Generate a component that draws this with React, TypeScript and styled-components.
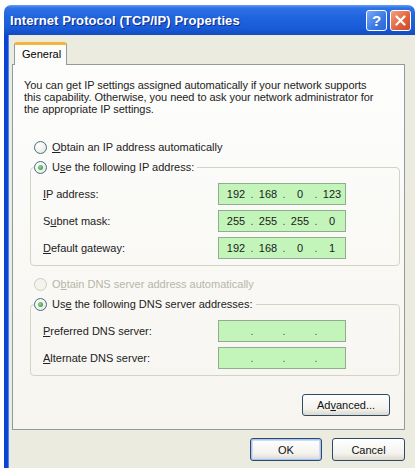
import styled, { createGlobalStyle } from "styled-components";

const GlobalStyle = createGlobalStyle`
  html, body {
    margin: 0;
    padding: 0;
    background: #fff;
  }
  body {
    font-family: "Liberation Sans", Arial, sans-serif;
    font-size: 11px;
    color: #000;
  }
`;

const ipRows = [
  { label: "IP address:", key: "I", rest: "P address:", value: ["192", "168", "0", "123"] },
  { label: "Subnet mask:", pre: "S", key: "u", rest: "bnet mask:", value: ["255", "255", "255", "0"] },
  { label: "Default gateway:", key: "D", rest: "efault gateway:", value: ["192", "168", "0", "1"] },
];

const dnsRows = [
  { key: "P", rest: "referred DNS server:", value: ["", "", "", ""] },
  { key: "A", rest: "lternate DNS server:", value: ["", "", "", ""] },
];

const App = () => {
  return (
    <>
      <GlobalStyle />
      <Window>
        <TitleBar>
          <Title>Internet Protocol (TCP/IP) Properties</Title>
          <CaptionButton $kind="help">?</CaptionButton>
          <CaptionButton $kind="close">
            <svg width="11" height="11" viewBox="0 0 11 11">
              <path d="M1.5 1.5 L9.5 9.5 M9.5 1.5 L1.5 9.5" stroke="#fff" strokeWidth="2.2" strokeLinecap="round" />
            </svg>
          </CaptionButton>
        </TitleBar>
        <Frame>
          <TabStrip>
            <Tab>General</Tab>
          </TabStrip>
          <Panel>
            <Description>
              You can get IP settings assigned automatically if your network supports
              <br />
              this capability. Otherwise, you need to ask your network administrator for
              <br />
              the appropriate IP settings.
            </Description>

            <RadioRow>
              <Radio />
              <span>
                <Key>O</Key>btain an IP address automatically
              </span>
            </RadioRow>

            <Group>
              <Legend>
                <Radio $checked />
                <span>
                  U<Key>s</Key>e the following IP address:
                </span>
              </Legend>
              <FieldGrid>
                {ipRows.map((row) => (
                  <Row key={row.label}>
                    <Label>
                      {row.pre}
                      <Key>{row.key}</Key>
                      {row.rest}
                    </Label>
                    <IpField value={row.value} />
                  </Row>
                ))}
              </FieldGrid>
            </Group>

            <RadioRow $disabled>
              <Radio $disabled />
              <span>
                O<Key>b</Key>tain DNS server address automatically
              </span>
            </RadioRow>

            <Group>
              <Legend>
                <Radio $checked />
                <span>
                  Us<Key>e</Key> the following DNS server addresses:
                </span>
              </Legend>
              <FieldGrid>
                {dnsRows.map((row) => (
                  <Row key={row.rest}>
                    <Label>
                      <Key>{row.key}</Key>
                      {row.rest}
                    </Label>
                    <IpField value={row.value} />
                  </Row>
                ))}
              </FieldGrid>
            </Group>

            <AdvancedButton>
              Ad<Key>v</Key>anced...
            </AdvancedButton>
          </Panel>

          <ButtonRow>
            <Button $default $width={72}>
              OK
            </Button>
            <Button $width={73}>Cancel</Button>
          </ButtonRow>
        </Frame>
      </Window>
    </>
  );
};

const IpField = ({ value }: { value: string[] }) => (
  <Field>
    {value.map((octet, i) => (
      <Segment key={i}>
        {i > 0 && <Dot>.</Dot>}
        <Octet>{octet}</Octet>
      </Segment>
    ))}
  </Field>
);

const Window = styled.div`
  margin: 5px 0 0 4px;
  width: 411px;
  height: 463px;
  display: flex;
  flex-direction: column;
  overflow: hidden;
  border-top-left-radius: 7px;
  border-top-right-radius: 7px;
`;

const TitleBar = styled.div`
  flex: none;
  height: 30px;
  display: flex;
  align-items: center;
  gap: 3px;
  padding: 0 4px 0 6px;
  background: linear-gradient(
    #639cf6 0%,
    #2f72e6 10%,
    #2064de 40%,
    #1a5cd8 75%,
    #114bc2 100%
  );
`;

const Title = styled.div`
  flex: 1;
  color: #fff;
  font: bold 13px "Liberation Sans", Arial, sans-serif;
  letter-spacing: 0.1px;
  text-shadow: 1px 1px 0 #0b2a8a;
`;

const CaptionButton = styled.div<{ $kind: "help" | "close" }>`
  width: 21px;
  height: 21px;
  box-sizing: border-box;
  border: 1px solid #fff;
  border-radius: 3px;
  display: flex;
  align-items: center;
  justify-content: center;
  color: #fff;
  font: bold 15px "Liberation Sans", Arial, sans-serif;
  background: ${(p) =>
    p.$kind === "help"
      ? "linear-gradient(135deg, #7aaaf6, #3a78e4 60%, #2f67d2)"
      : "linear-gradient(135deg, #f3a27e, #e0603a 60%, #c94a2c)"};
`;

const Frame = styled.div`
  flex: 1;
  display: flex;
  flex-direction: column;
  border-left: 4px solid #0b44d3;
  box-shadow: inset 1px 0 0 #4b83ee;
  background: #ecebdf;
  padding: 7px 10px 0 4px;
`;

const TabStrip = styled.div`
  display: flex;
  padding-left: 2px;
  margin-bottom: -1px;
  position: relative;
  z-index: 1;
`;

const Tab = styled.div`
  width: 53px;
  height: 23px;
  box-sizing: border-box;
  border: 1px solid #919b9c;
  border-bottom: none;
  border-top: 3px solid #f5b43a;
  border-radius: 3px 3px 0 0;
  background: #fcfcfb;
  padding: 3px 0 0 7px;
`;

const Panel = styled.div`
  height: 366px;
  box-sizing: border-box;
  border: 1px solid #919b9c;
  background: linear-gradient(#fdfdfc, #f6f5f0);
  padding: 0 4px 0 11px;
  display: flex;
  flex-direction: column;
`;

const Description = styled.p`
  margin: 14px 0 0;
  line-height: 12px;
  letter-spacing: -0.05px;
  color: #222;
`;

const RadioRow = styled.div<{ $disabled?: boolean }>`
  display: flex;
  align-items: center;
  gap: 5px;
  height: 16px;
  margin-left: 10px;
  margin-top: ${(p) => (p.$disabled ? "10px" : "24px")};
  color: ${(p) => (p.$disabled ? "#b8b6a8" : "#222")};
`;

const Radio = styled.span<{ $checked?: boolean; $disabled?: boolean }>`
  width: 13px;
  height: 13px;
  box-sizing: border-box;
  border-radius: 50%;
  border: 1px solid ${(p) => (p.$disabled ? "#cfcdc0" : "#4a6f7e")};
  background: ${(p) =>
    p.$disabled ? "#f4f3ee" : "radial-gradient(circle at 35% 35%, #fff, #e3e2dc)"};
  display: inline-flex;
  align-items: center;
  justify-content: center;
  flex: none;

  &::after {
    content: "";
    width: 5px;
    height: 5px;
    border-radius: 50%;
    background: ${(p) =>
      p.$checked ? "radial-gradient(circle at 40% 40%, #8ed88e, #2f8a3a)" : "transparent"};
  }
`;

const Key = styled.span`
  text-decoration: underline;
`;

const Group = styled.fieldset`
  margin: 4px 0 0 6px;
  padding: 8px 0 6px 12px;
  border: 1px solid #d3d2c3;
  border-radius: 4px;
  min-width: 0;
`;

const Legend = styled.legend`
  display: flex;
  align-items: center;
  gap: 5px;
  height: 16px;
  margin-left: -9px;
  padding: 0 3px 0 0;
  color: #222;
`;

const FieldGrid = styled.div`
  display: flex;
  flex-direction: column;
  gap: 5px;
`;

const Row = styled.div`
  display: grid;
  grid-template-columns: 175px 128px;
  align-items: center;
  height: 22px;
`;

const Label = styled.span`
  color: #222;
`;

const Field = styled.div`
  height: 22px;
  box-sizing: border-box;
  border: 1px solid #90ae8c;
  background: #c3f5bb;
  display: flex;
  align-items: center;
  padding: 0 4px 0 5px;
`;

const Segment = styled.span`
  display: flex;
`;

const Octet = styled.span`
  width: 24px;
  text-align: center;
  color: #1a1a1a;
`;

const Dot = styled.span`
  width: 8px;
  text-align: center;
  color: #555;
`;

const Button = styled.button<{ $default?: boolean; $width: number }>`
  width: ${(p) => p.$width}px;
  height: 23px;
  box-sizing: border-box;
  border: 1px solid #2f4a68;
  border-radius: 3px;
  background: linear-gradient(#ffffff, #f3f2ed 70%, #dcd8cc);
  font: 11px "Liberation Sans", Arial, sans-serif;
  color: #111;
  padding: 0;
  box-shadow: ${(p) =>
    p.$default ? "inset 0 0 0 1px #a9c3ee, inset 0 0 0 2px #cfdcf5" : "none"};
`;

const AdvancedButton = styled(Button).attrs({ $width: 88 })`
  height: 22px;
  align-self: flex-end;
  margin: 18px 10px 0 0;
`;

const ButtonRow = styled.div`
  display: flex;
  justify-content: flex-end;
  gap: 10px;
  margin-top: 8px;
`;

export default App;
